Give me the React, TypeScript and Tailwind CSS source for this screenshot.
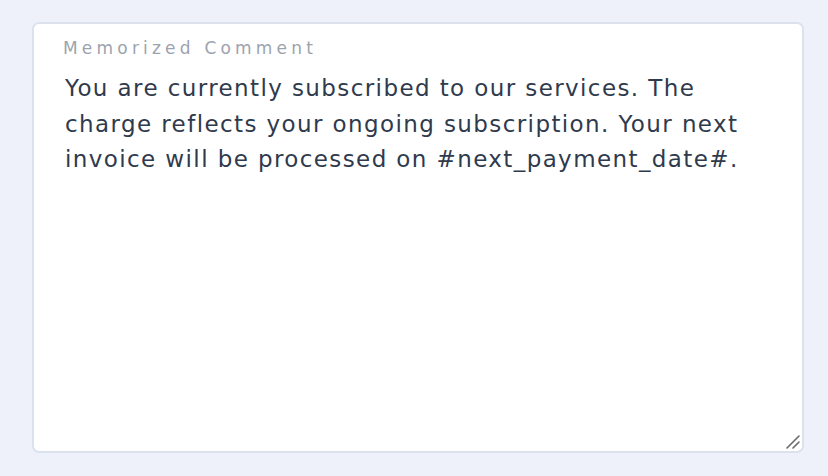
import React from "react";

export default function App() {
  return (
    <div className="w-[828px] h-[476px] bg-[#eef1f9] pt-[22px] pl-[32px]" style={{ fontFamily: "'DejaVu Sans', sans-serif" }}>
      <div className="relative w-[772px] h-[431px] bg-white border-2 border-[#dbe2ee] rounded-[7px] flex flex-col overflow-hidden">
        <label className="pl-[29px] pt-[12px] text-[17px] leading-[24px] text-[#9ca3ae] tracking-[4.2px]">
          Memorized Comment
        </label>
        <textarea
          className="flex-1 w-full pl-[31px] pr-[30px] pt-[11px] text-[23px] leading-[35.5px] tracking-[1.4px] text-[#2f3a4d] outline-none resize-none"
          defaultValue="You are currently subscribed to our services. The charge reflects your ongoing subscription. Your next invoice will be processed on #next_payment_date#."
        />
        <svg className="absolute right-[2px] bottom-[2px] pointer-events-none" width="14" height="14" viewBox="0 0 14 14">
          <path d="M1 13 L13 1" stroke="#6b6b6b" strokeWidth="1.6" strokeLinecap="round" />
          <path d="M7 13 L13 7" stroke="#6b6b6b" strokeWidth="1.6" strokeLinecap="round" />
        </svg>
      </div>
    </div>
  );
}
